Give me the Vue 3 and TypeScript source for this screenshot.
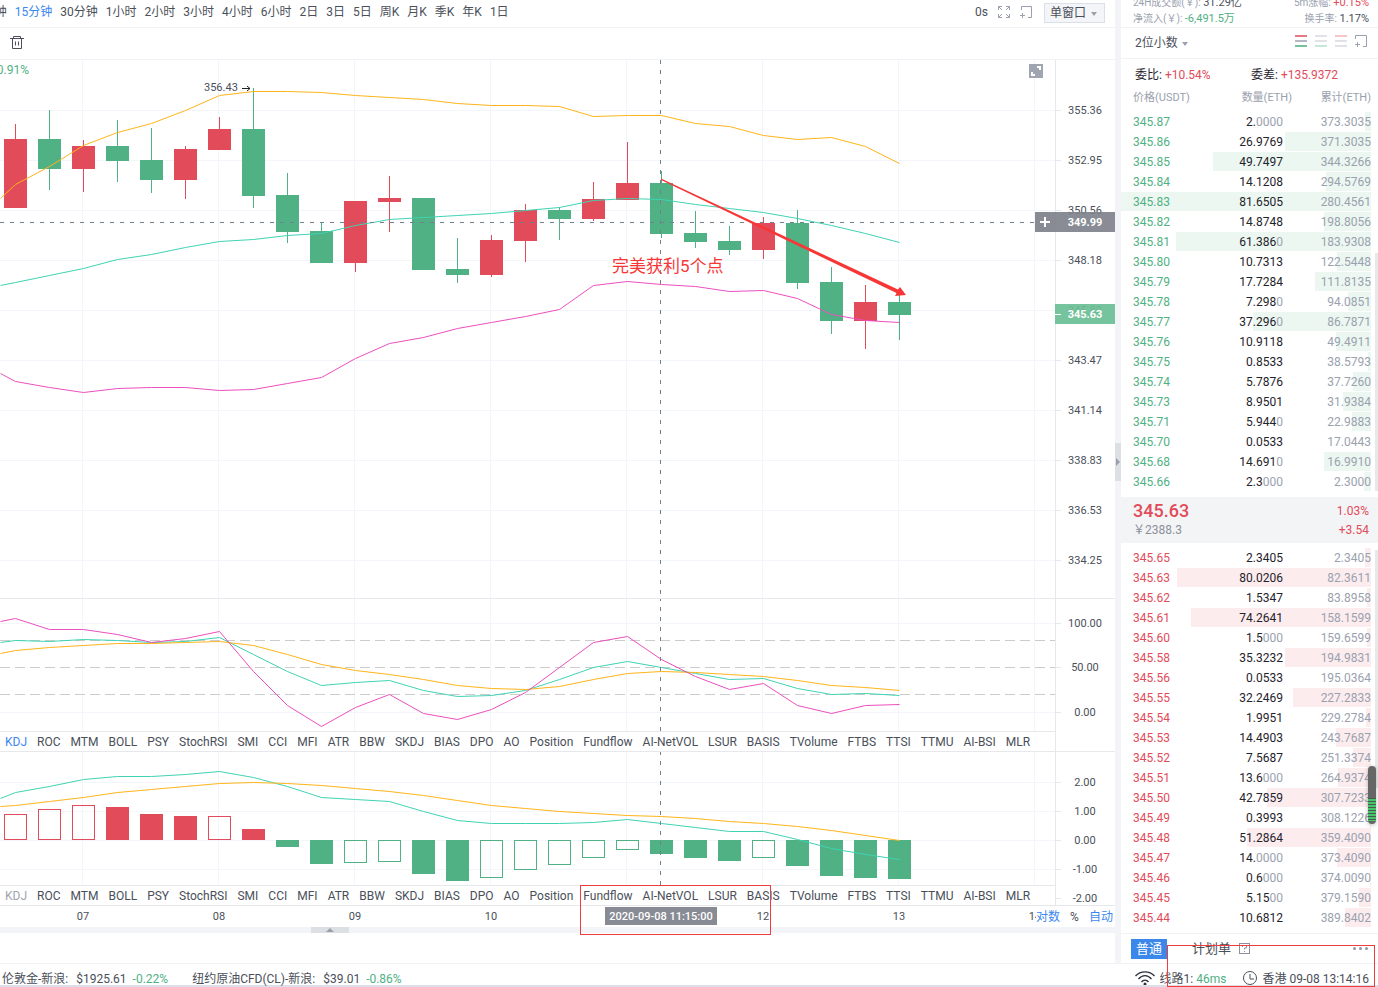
<script setup lang="ts">
import { ref } from 'vue'

type Point = [number, number]

interface Candle {
  up: boolean
  high: number
  top: number
  bottom: number
  low: number
}

interface Histogram {
  color: 'red' | 'green'
  filled: boolean
  edge: number
}

interface Order {
  price: string
  amount: string
  total: string
}

const STEP = 34
const ZERO_LINE = 840

const periods = ['5分钟', '15分钟', '30分钟', '1小时', '2小时', '3小时', '4小时', '6小时', '2日', '3日', '5日', '周K', '月K', '季K', '年K', '1日']
const activePeriod = ref('15分钟')

const indicators = ['KDJ', 'ROC', 'MTM', 'BOLL', 'PSY', 'StochRSI', 'SMI', 'CCI', 'MFI', 'ATR', 'BBW', 'SKDJ', 'BIAS', 'DPO', 'AO', 'Position', 'Fundflow', 'AI-NetVOL', 'LSUR', 'BASIS', 'TVolume', 'FTBS', 'TTSI', 'TTMU', 'AI-BSI', 'MLR']

const rawCandles: [boolean, number, number, number, number][] = [
  [true, 124, 139, 208, 208], [false, 110, 139, 169, 190], [true, 140, 146, 169, 192],
  [false, 120, 146, 161, 182], [false, 128, 160, 180, 193], [true, 146, 149, 180, 199],
  [true, 117, 129, 150, 150], [false, 88, 129, 196, 208], [false, 173, 195, 232, 243],
  [false, 222, 231, 263, 263], [true, 201, 201, 263, 272], [true, 176, 198, 202, 232],
  [false, 198, 198, 270, 270], [false, 238, 269, 275, 283], [true, 235, 240, 275, 277],
  [true, 204, 210, 241, 262], [false, 207, 210, 219, 240], [true, 182, 199, 219, 221],
  [true, 142, 183, 200, 200], [false, 171, 183, 234, 238], [false, 211, 233, 242, 248],
  [false, 226, 241, 250, 255], [true, 217, 223, 250, 259], [false, 210, 223, 283, 289],
  [false, 267, 282, 321, 334], [true, 285, 302, 321, 349], [false, 295, 302, 315, 340],
]
const candles: Candle[] = rawCandles.map(([up, high, top, bottom, low]) => ({ up, high, top, bottom, low }))

const rawBars: [string, number][] = [
  ['rh', 814], ['rh', 809], ['rh', 805], ['rf', 807], ['rf', 814], ['rf', 816], ['rh', 816], ['rf', 829],
  ['gf', 847], ['gf', 864], ['gh', 863], ['gh', 862], ['gf', 874], ['gf', 881], ['gh', 878], ['gh', 870],
  ['gh', 865], ['gh', 858], ['gh', 850], ['gf', 854], ['gf', 858], ['gf', 861], ['gh', 858], ['gf', 866],
  ['gf', 876], ['gf', 878], ['gf', 879],
]
const bars: Histogram[] = rawBars.map(([kind, edge]) => ({
  color: kind[0] === 'r' ? 'red' : 'green',
  filled: kind[1] === 'f',
  edge,
}))

// The first value sits on the left edge, the rest on the candle centres.
function line(values: number[]): string {
  const points: Point[] = values.map((y, i) => [i === 0 ? 0 : 15 + (i - 1) * STEP, y])
  return points.map(([x, y]) => `${x + 0.5},${y + 0.5}`).join(' ')
}

const bollUpper = line([198, 184, 166, 145, 132, 123, 110, 95, 91, 91, 92, 95, 97, 99, 103, 105, 105, 106, 116, 115, 115, 123, 126, 135, 139, 137, 146, 163])
const bollMiddle = line([285, 282, 275, 268, 259, 254, 247, 241, 239, 235, 233, 225, 219, 217, 215, 213, 210, 207, 200, 198, 199, 204, 208, 212, 218, 225, 233, 242])
const bollLower = line([373, 381, 387, 392, 388, 387, 387, 390, 389, 383, 377, 358, 343, 337, 328, 322, 316, 309, 285, 281, 284, 286, 291, 290, 298, 314, 320, 322])
const kdjK = line([642, 640, 641, 639, 640, 642, 641, 637, 654, 671, 685, 682, 680, 690, 696, 695, 690, 679, 667, 661, 667, 673, 679, 678, 688, 694, 693, 695])
const kdjD = line([653, 650, 647, 645, 643, 643, 642, 641, 645, 654, 664, 670, 674, 679, 685, 688, 689, 686, 679, 673, 671, 672, 674, 676, 680, 685, 687, 690])
const kdjJ = line([621, 618, 629, 629, 634, 642, 638, 631, 671, 705, 726, 707, 694, 713, 719, 709, 692, 667, 642, 636, 659, 676, 689, 683, 705, 713, 705, 704])
const macdFast = line([798, 792, 786, 779, 776, 776, 774, 771, 777, 786, 797, 799, 801, 811, 820, 823, 823, 823, 822, 819, 823, 827, 831, 831, 839, 848, 854, 859])
const macdSlow = line([806, 805, 801, 797, 792, 789, 786, 783, 782, 783, 785, 788, 791, 795, 800, 805, 808, 811, 813, 815, 816, 818, 821, 823, 826, 830, 835, 840])

const hourLines = [82, 218, 354, 490, 626, 762, 898, 1034]
const hourLabels = ['07', '08', '09', '10', '', '12', '13', '14']
const priceGrid = [110, 160, 210, 260, 310, 360, 410, 460, 510, 560]
const axisLabels: [number, string][] = [
  [110, '355.36'], [160, '352.95'], [210, '350.56'], [260, '348.18'], [310, '345.82'], [360, '343.47'],
  [410, '341.14'], [460, '338.83'], [510, '336.53'], [560, '334.25'],
  [623, '100.00'], [667, '50.00'], [712, '0.00'],
  [782, '2.00'], [811, '1.00'], [840, '0.00'], [869, '-1.00'], [898, '-2.00'],
]

function orders(text: string): Order[] {
  return text.trim().split('\n').map((row) => {
    const [price, amount, total] = row.trim().split(' ')
    return { price, amount, total }
  })
}

const bids = orders(`
  345.87 2.0000 373.3035
  345.86 26.9769 371.3035
  345.85 49.7497 344.3266
  345.84 14.1208 294.5769
  345.83 81.6505 280.4561
  345.82 14.8748 198.8056
  345.81 61.3860 183.9308
  345.80 10.7313 122.5448
  345.79 17.7284 111.8135
  345.78 7.2980 94.0851
  345.77 37.2960 86.7871
  345.76 10.9118 49.4911
  345.75 0.8533 38.5793
  345.74 5.7876 37.7260
  345.73 8.9501 31.9384
  345.71 5.9440 22.9883
  345.70 0.0533 17.0443
  345.68 14.6910 16.9910
  345.66 2.3000 2.3000`)

const asks = orders(`
  345.65 2.3405 2.3405
  345.63 80.0206 82.3611
  345.62 1.5347 83.8958
  345.61 74.2641 158.1599
  345.60 1.5000 159.6599
  345.58 35.3232 194.9831
  345.56 0.0533 195.0364
  345.55 32.2469 227.2833
  345.54 1.9951 229.2784
  345.53 14.4903 243.7687
  345.52 7.5687 251.3374
  345.51 13.6000 264.9374
  345.50 42.7859 307.7233
  345.49 0.3993 308.1226
  345.48 51.2864 359.4090
  345.47 14.0000 373.4090
  345.46 0.6000 374.0090
  345.45 5.1500 379.1590
  345.44 10.6812 389.8402`)

function depth(order: Order, full: number): string {
  return `${Math.min(100, (Number(order.amount) / full) * 100).toFixed(1)}%`
}

function significant(amount: string): string {
  return amount.replace(/0+$/, '')
}

function zeros(amount: string): string {
  return amount.slice(significant(amount).length)
}
</script>

<template>
  <div class="app">
    <div class="main">
      <section class="left">
        <header class="periods">
          <nav class="period-list">
            <button v-for="p in periods" :key="p" type="button" :class="{ active: p === activePeriod }" @click="activePeriod = p">{{ p }}</button>
          </nav>
          <div class="header-tools">
            <span>0s</span>
            <button type="button" aria-label="全屏">
              <svg width="12" height="12" fill="none" stroke="#9aa1ae">
                <path d="M.5 4V.5H4M8 .5h3.5V4M11.5 8v3.5H8M4 11.5H.5V8M1 1l3 3M11 1 8 4M11 11 8 8M1 11l3-3" />
              </svg>
            </button>
            <button type="button" aria-label="添加窗口">
              <svg width="12" height="12" fill="none" stroke="#9aa1ae">
                <path d="M1.500 4V.5h10v11H8M0 9.500h5M2.500 7v5" />
              </svg>
            </button>
            <label class="select window-select">
              <select aria-label="窗口"><option>单窗口</option></select>
              <i class="caret"></i>
            </label>
          </div>
        </header>

        <div class="draw-tools">
          <button type="button" aria-label="删除">
            <svg width="14" height="13" fill="none" stroke="#4a4f59">
              <path d="M0 2.500h14M3.500 2V.5h7V2M2.500 3v9.500h9V3M5.500 5.500v4M8.500 5.500v4" />
            </svg>
          </button>
        </div>

        <div class="charts">
          <div class="plots">
            <svg class="plot price-plot">
              <g transform="translate(0,-60)">
                <g class="grid">
                  <line v-for="y in priceGrid" :key="y" x1="0" x2="100%" :y1="y + 0.5" :y2="y + 0.5" />
                  <line v-for="x in hourLines" :key="x" :x1="x + 0.5" :x2="x + 0.5" y1="60" y2="598" />
                </g>
                <g v-for="(c, i) in candles" :key="i" :class="c.up ? 'red' : 'green'">
                  <rect :x="15 + i * STEP" :y="c.high" width="1" :height="c.low - c.high" />
                  <rect :x="4 + i * STEP" :y="c.top" width="23" :height="c.bottom - c.top" />
                </g>
                <polyline class="curve yellow" :points="bollUpper" />
                <polyline class="curve teal" :points="bollMiddle" />
                <polyline class="curve pink" :points="bollLower" />
                <g class="cross">
                  <line x1="0" x2="100%" y1="222.500" y2="222.500" />
                  <line x1="660.500" x2="660.500" y1="60" y2="598" />
                </g>
                <text class="change" x="29" y="74" text-anchor="end">-0.91%</text>
                <text class="peak" x="204" y="91">356.43</text>
                <path d="M242 88.500h8M247 86l3 2.500-3 2.500" fill="none" stroke="#222" />
                <polygon class="arrow" points="661,178.500 898,289.500 900,287 906,295 895,296 896.500,293 661,180" />
                <text class="note" x="612" y="272">完美获利5个点</text>
              </g>
            </svg>
            <svg class="plot kdj-plot">
              <g transform="translate(0,-599)">
                <g class="grid">
                  <line v-for="y in [623, 712]" :key="y" x1="0" x2="100%" :y1="y + 0.5" :y2="y + 0.5" />
                  <line v-for="x in hourLines" :key="x" :x1="x + 0.5" :x2="x + 0.5" y1="599" y2="731" />
                </g>
                <line v-for="y in [640, 667, 694]" :key="y" class="level" x1="0" x2="100%" :y1="y + 0.5" :y2="y + 0.5" />
                <polyline class="curve teal" :points="kdjK" />
                <polyline class="curve yellow" :points="kdjD" />
                <polyline class="curve pink" :points="kdjJ" />
                <line class="cross" x1="660.500" x2="660.500" y1="597" y2="731" />
              </g>
            </svg>
            <nav class="indicators first">
              <button v-for="name in indicators" :key="name" type="button">{{ name }}</button>
            </nav>
            <svg class="plot macd-plot">
              <g transform="translate(0,-752)">
                <g class="grid">
                  <line v-for="y in [782, 811, 840, 869]" :key="y" x1="0" x2="100%" :y1="y + 0.5" :y2="y + 0.5" />
                  <line v-for="x in hourLines" :key="x" :x1="x + 0.5" :x2="x + 0.5" y1="752" y2="885" />
                </g>
                <template v-for="(b, i) in bars" :key="i">
                  <rect v-if="b.filled" :class="b.color" :x="4 + i * STEP" :y="Math.min(b.edge, ZERO_LINE)" width="23" :height="Math.abs(b.edge - ZERO_LINE)" />
                  <rect v-else class="hollow" :class="b.color" :x="4.5 + i * STEP" :y="Math.min(b.edge, ZERO_LINE) + 0.5" width="22" :height="Math.abs(b.edge - ZERO_LINE) - 1" />
                </template>
                <polyline class="curve teal" :points="macdFast" />
                <polyline class="curve yellow" :points="macdSlow" />
                <line class="cross" x1="660.500" x2="660.500" y1="751" y2="885" />
              </g>
            </svg>
            <nav class="indicators second">
              <button v-for="name in indicators" :key="name" type="button">{{ name }}</button>
            </nav>
            <button class="expand" type="button" aria-label="展开">
              <svg width="14" height="14" fill="none" stroke="#fff" stroke-width="2"><path d="M8 3h3v3M6 11H3V8" /></svg>
            </button>
            <button class="add-alert" type="button" aria-label="添加">
              <svg width="10" height="10" stroke="#fff" stroke-width="2"><path d="M0 5h10M5 0v10" /></svg>
            </button>
          </div>
          <svg class="axis">
            <g transform="translate(0,-60)">
              <line class="edge" x1="0.500" x2="0.500" y1="60" y2="906" />
              <line v-for="y in [598, 751, 905]" :key="y" class="edge" x1="0" x2="60" :y1="y + 0.5" :y2="y + 0.5" />
              <g v-for="([y, label], i) in axisLabels" :key="i">
                <line class="edge" x1="0" x2="6" :y1="y + 0.5" :y2="y + 0.5" />
                <text :x="30" :y="y + 4" text-anchor="middle">{{ label }}</text>
              </g>
              <rect x="0" y="212" width="60" height="20" fill="#7c7f88" fill-opacity="0.9" />
              <text class="badge" x="30" y="226" text-anchor="middle">349.99</text>
              <rect x="0" y="304" width="60" height="20" fill="#6abf95" fill-opacity="0.92" />
              <line x1="0" x2="6" y1="314.500" y2="314.500" stroke="#fff" />
              <text class="badge" x="30" y="318" text-anchor="middle">345.63</text>
            </g>
          </svg>
        </div>

        <div class="time-axis">
          <svg>
            <text v-for="(x, i) in hourLines" :key="x" :x="x + 1" y="14" text-anchor="middle">{{ hourLabels[i] }}</text>
            <rect x="605" y="1" width="112" height="18" fill="#888b93" />
            <text class="badge" x="661" y="14" text-anchor="middle">2020-09-08 11:15:00</text>
          </svg>
          <div class="scale-modes">
            <button class="on" type="button">对数</button>
            <button type="button">%</button>
            <button class="on" type="button">自动</button>
          </div>
        </div>
        <div class="drawer-edge"><button type="button" aria-label="展开面板"><i></i></button></div>
        <div class="time-mark"></div>
      </section>

      <div class="gutter"><button type="button" aria-label="收起"><i></i></button></div>

      <aside class="book">
        <div class="stats">
          <p><span>24H成交额(￥): <b>31.29亿</b></span><span>5m涨幅: <b class="fall">+0.15%</b></span></p>
          <p><span>净流入(￥): <b class="rise">-6,491.5万</b></span><span>换手率: <b>1.17%</b></span></p>
        </div>
        <div class="book-tools">
          <label class="select">
            <select aria-label="小数位数"><option>2位小数</option></select>
            <i class="caret"></i>
          </label>
          <div class="views">
            <button type="button" aria-label="全部"><svg width="12" height="12"><rect width="12" height="2" fill="#e67a84" /><rect y="5" width="12" height="2" fill="#b3b8c4" /><rect y="10" width="12" height="2" fill="#74c29c" /></svg></button>
            <button type="button" aria-label="买单"><svg width="12" height="12"><rect width="12" height="2" fill="#e1e2e7" /><rect y="5" width="12" height="2" fill="#e1e2e7" /><rect y="10" width="12" height="2" fill="#c9e7d9" /></svg></button>
            <button type="button" aria-label="卖单"><svg width="12" height="12"><rect width="12" height="2" fill="#f3c6ca" /><rect y="5" width="12" height="2" fill="#e1e2e7" /><rect y="10" width="12" height="2" fill="#e1e2e7" /></svg></button>
            <button type="button" aria-label="添加窗口"><svg width="12" height="12" fill="none" stroke="#9aa1ae"><path d="M.5 4V.5h11v11H8M0 9.500h5M2.500 7v5" /></svg></button>
          </div>
        </div>
        <div class="ratio">
          <span>委比: <b>+10.54%</b></span>
          <span>委差: <b>+135.9372</b></span>
        </div>
        <div class="scroll bids-scroll">
          <table class="bids">
            <thead>
              <tr><th>价格(USDT)</th><th>数量(ETH)</th><th>累计(ETH)</th></tr>
            </thead>
            <tbody>
              <tr v-for="o in bids" :key="o.price" :style="{ '--depth': depth(o, 78.7) }">
                <td>{{ o.price }}</td>
                <td>{{ significant(o.amount) }}<span>{{ zeros(o.amount) }}</span></td>
                <td>{{ o.total }}</td>
              </tr>
            </tbody>
          </table>
        </div>
        <div class="last">
          <div><strong>345.63</strong><span class="fall">1.03%</span></div>
          <div><span class="fiat">￥2388.3</span><span class="fall">+3.54</span></div>
        </div>
        <div class="scroll asks-scroll">
          <table class="asks" aria-label="卖单">
            <tbody>
              <tr v-for="o in asks" :key="o.price" :style="{ '--depth': depth(o, 103.1) }">
                <td>{{ o.price }}</td>
                <td>{{ significant(o.amount) }}<span>{{ zeros(o.amount) }}</span></td>
                <td>{{ o.total }}</td>
              </tr>
            </tbody>
          </table>
        </div>
        <div class="order-tabs">
          <button class="current" type="button">普通</button>
          <button type="button">计划单</button>
          <svg width="11" height="11" fill="none" stroke="#8b90a3"><rect x=".5" y=".5" width="10" height="10" /><path d="M3.500 4V2.500h4V5h-2v1.500M5.500 8v1" /></svg>
          <button class="more" type="button" aria-label="更多"><i></i><i></i><i></i></button>
        </div>
        <div class="meter"></div>
      </aside>
    </div>

    <footer class="footer">
      <p class="ticker"><span>伦敦金-新浪:</span><span>$1925.61</span><b>-0.22%</b></p>
      <p class="ticker"><span>纽约原油CFD(CL)-新浪:</span><span>$39.01</span><b>-0.86%</b></p>
      <div class="status">
        <svg width="20" height="14" fill="none" stroke="#2b2f38">
          <path d="M.5 5C5.500-.5 14.500-.5 19.500 5M3.500 8c4-4.500 9-4.500 13 0M6.500 11c2-2.500 5-2.500 7 0" stroke-width="1.300" /><circle cx="10" cy="13" r="1.500" fill="#2b2f38" stroke="none" />
        </svg>
        <span>线路1: <b>46ms</b></span>
        <svg class="clock" width="14" height="14" fill="none" stroke="#4a4f59"><circle cx="7" cy="7" r="6.500" /><path d="M7 3v5h4" /></svg>
        <span>香港 09-08 13:14:16</span>
      </div>
      <div class="status-mark"></div>
    </footer>
  </div>
</template>

<style>
body {
  margin: 0;
  background: #fff;
}
</style>

<style scoped>
.app {
  position: relative;
  display: flex;
  flex-direction: column;
  min-height: 100vh;
  overflow: hidden;
  color: #4a4f59;
  font: 12px/16px Roboto, "Noto Sans CJK SC", sans-serif;
}
.app * {
  box-sizing: border-box;
}
button {
  padding: 0;
  border: 0;
  background: none;
  color: inherit;
  font: inherit;
  white-space: nowrap;
  cursor: pointer;
}
button svg {
  display: block;
}
p {
  margin: 0;
}
b {
  font-weight: 400;
}
.main {
  display: flex;
  flex: 1;
}
.left {
  position: relative;
  display: flex;
  flex: 1;
  flex-direction: column;
  min-width: 0;
}
.periods {
  display: flex;
  align-items: center;
  justify-content: space-between;
  height: 28px;
  padding-right: 10px;
  border-bottom: 1px solid #f0f2f5;
}
.period-list {
  display: flex;
  gap: 8px;
  min-width: 0;
  margin: -4px 0 0 -24px;
}
.period-list .active {
  color: #3b87f0;
}
.header-tools {
  display: flex;
  align-items: center;
  gap: 10px;
  margin-top: -4px;
}
.select {
  display: flex;
  align-items: center;
  gap: 4px;
}
select {
  padding: 0;
  border: 0;
  outline: 0;
  background: none;
  color: inherit;
  font: inherit;
  appearance: none;
}
.caret {
  margin-top: 2px;
  border: 3px solid transparent;
  border-top: 4px solid #9aa1ae;
  border-bottom: 0;
}
.window-select {
  height: 20px;
  margin: 2px 0 0 2px;
  padding: 0 7px 0 5px;
  border: 1px solid #dcdfe6;
  background: #f3f5f8;
}
.draw-tools {
  display: flex;
  align-items: center;
  height: 32px;
  padding: 0 0 2px 10px;
  border-bottom: 1px solid #f0f2f5;
}
.charts {
  display: flex;
}
.plots {
  position: relative;
  display: flex;
  flex: 1;
  flex-direction: column;
  min-width: 0;
}
.plot {
  display: block;
  width: 100%;
  overflow: hidden;
}
.price-plot {
  height: 539px;
  border-bottom: 1px solid #e6e8eb;
}
.kdj-plot {
  height: 132px;
}
.macd-plot {
  height: 133px;
}
.axis {
  flex: none;
  width: 60px;
  height: 846px;
}
.axis text,
.time-axis text,
.peak {
  fill: #4a4f59;
  font-size: 11px;
}
.axis .badge,
.time-axis .badge {
  fill: #fff;
  font-weight: 700;
}
.time-axis .badge {
  font-weight: 500;
}
.grid line {
  stroke: #f2f5f9;
}
.edge {
  stroke: #e6e8eb;
}
.level {
  stroke: #ccc;
  stroke-dasharray: 10 5;
}
.cross {
  stroke: #708090;
  stroke-dasharray: 4 6;
}
.red {
  fill: #e24b59;
}
.green {
  fill: #50b184;
}
.hollow {
  fill: none;
}
.hollow.red {
  stroke: #e24b59;
}
.hollow.green {
  stroke: #50b184;
}
.curve {
  fill: none;
  stroke-width: 1;
}
.yellow {
  stroke: #ffb41a;
}
.teal {
  stroke: #3fd3b3;
}
.pink {
  stroke: #ec4fbe;
}
.change {
  fill: #50b184;
}
.arrow,
.note {
  fill: #f73737;
}
.note {
  font-size: 17px;
}
.indicators {
  display: flex;
  gap: 10px;
  height: 21px;
  padding-left: 5px;
  overflow: hidden;
  border-top: 1px solid #e6e8eb;
  border-bottom: 1px solid #e6e8eb;
}
.first button:first-child {
  color: #3b87f0;
}
.second button:first-child {
  color: #a0a5b0;
}
.expand {
  position: absolute;
  top: 4px;
  right: 12px;
  background: #a0a5b2;
}
.add-alert {
  position: absolute;
  top: 152px;
  right: 0;
  display: grid;
  place-items: center;
  width: 20px;
  height: 20px;
  background: #888b93;
}
.time-axis {
  display: flex;
  height: 21px;
}
.time-axis svg {
  flex: 1;
  min-width: 0;
  height: 21px;
}
.scale-modes {
  display: flex;
  justify-content: space-between;
  width: 79px;
  padding-right: 2px;
}
.scale-modes .on {
  color: #3b87f0;
}
.drawer-edge {
  height: 6px;
  background: #f2f4f8;
}
.drawer-edge button {
  display: grid;
  place-items: center;
  width: 38px;
  height: 6px;
  margin-left: 311px;
  background: #dcdfe4;
}
.drawer-edge i {
  border: 4px solid transparent;
  border-top: 0;
  border-bottom-color: #9aa1ae;
}
.time-mark {
  position: absolute;
  top: 885px;
  left: 580px;
  width: 191px;
  height: 50px;
  border: 1px solid #f03c3c;
  pointer-events: none;
}
.gutter {
  display: flex;
  flex: none;
  align-items: center;
  width: 6px;
  background: #f2f4f8;
}
.gutter button {
  display: grid;
  place-items: center;
  width: 6px;
  height: 38px;
  margin-top: -39px;
  background: #dcdfe4;
}
.gutter i {
  border: 4px solid transparent;
  border-right: 0;
  border-left-color: #9aa1ae;
}
.book {
  position: relative;
  flex: none;
  width: 257px;
}
.stats {
  display: flex;
  flex-direction: column;
  justify-content: flex-end;
  height: 28px;
  padding: 0 9px 0 12px;
  overflow: hidden;
  border-bottom: 1px solid #f0f2f5;
  color: #9aa1ae;
  font-size: 10px;
}
.stats p {
  display: flex;
  flex: none;
  justify-content: space-between;
}
.stats b {
  color: #4a4f59;
  font-size: 11px;
}
.stats .rise {
  color: #50b184;
}
.stats .fall,
.fall {
  color: #e24b59;
}
.book-tools {
  display: flex;
  align-items: center;
  justify-content: space-between;
  height: 31px;
  padding: 0 11px 0 14px;
  border-bottom: 1px solid #f0f2f5;
}
.views {
  display: flex;
  gap: 8px;
  margin-top: -4px;
}
.ratio {
  display: grid;
  grid-template-columns: 116px 1fr;
  padding: 8px 0 0 14px;
  color: #1f232b;
}
.ratio b {
  color: #e24b59;
}
.scroll {
  position: relative;
  padding-right: 7px;
}
.scroll::after {
  position: absolute;
  top: 2px;
  right: 0;
  width: 3px;
  height: 238px;
  background: #e6e8ec;
  content: "";
}
.bids-scroll {
  padding-bottom: 5px;
}
.bids-scroll::after {
  top: 170px;
}
.asks-scroll {
  padding: 5px 7px 5px 0;
}
.asks-scroll::after {
  top: 7px;
}
table {
  width: 100%;
  border-spacing: 0;
  table-layout: fixed;
}
th {
  height: 29px;
  padding: 0;
  color: #9aa1ae;
  font-size: 11px;
  font-weight: 400;
  text-align: right;
  white-space: nowrap;
}
th:first-child,
td:first-child {
  width: 70px;
  padding-left: 12px;
  text-align: left;
}
th:nth-child(2),
td:nth-child(2) {
  width: 101px;
}
td {
  height: 20px;
  padding: 0;
  color: #9aa1ae;
  text-align: right;
}
td:nth-child(2) {
  padding-right: 9px;
  color: #1f232b;
}
td span {
  color: #9aa1ae;
}
tbody tr {
  background-repeat: no-repeat;
  background-position: right top;
  background-size: var(--depth) 19px;
}
.bids tbody tr {
  background-image: linear-gradient(#ecf7f1, #ecf7f1);
}
.asks tbody tr {
  background-image: linear-gradient(#fcecee, #fcecee);
}
.bids td:first-child {
  color: #50b184;
}
.asks td:first-child {
  color: #e24b59;
}
.last {
  height: 46px;
  padding: 4px 9px 0 12px;
  background: #f3f4f6;
}
.last div {
  display: flex;
  align-items: center;
  justify-content: space-between;
  height: 19px;
}
.last strong {
  color: #e24b59;
  font-size: 18px;
  font-weight: 500;
}
.fiat {
  color: #8b909b;
}
.order-tabs {
  display: flex;
  align-items: center;
  height: 30px;
  padding: 0 10px;
  border-top: 1px solid #f0f2f5;
  font-size: 13px;
}
.order-tabs .current {
  width: 36px;
  height: 20px;
  margin-right: 25px;
  background: #3b87ea;
  color: #fff;
}
.order-tabs svg {
  margin-left: 8px;
}
.more {
  display: flex;
  gap: 3px;
  margin-left: auto;
}
.more i {
  width: 3px;
  height: 3px;
  border-radius: 50%;
  background: #9096a8;
}
.meter {
  position: absolute;
  top: 766px;
  right: 2px;
  width: 8px;
  height: 58px;
  border-radius: 4px;
  background:
    repeating-linear-gradient(#4a5a4e 0 1px, #48c46c 1px 3px) 0 32px / 8px 23px no-repeat,
    #666;
  box-shadow: 0 1px 4px #0004;
}
.footer {
  position: relative;
  display: flex;
  gap: 24px;
  height: 24px;
  padding: 7px 9px 0 2px;
  border-top: 1px solid #f0f2f5;
  border-bottom: 2px solid #dcdee9;
  white-space: nowrap;
}
.ticker {
  display: flex;
  gap: 6px;
}
.ticker span:first-child {
  margin-right: 2px;
}
.footer b {
  color: #50b184;
}
.status {
  display: flex;
  gap: 5px;
  margin-left: auto;
}
.status .clock {
  margin-left: 12px;
}
.status svg {
  flex: none;
}
.status-mark {
  position: absolute;
  right: 3px;
  bottom: -2px;
  width: 208px;
  height: 42px;
  border: 1px solid #f03c3c;
  pointer-events: none;
}
</style>
